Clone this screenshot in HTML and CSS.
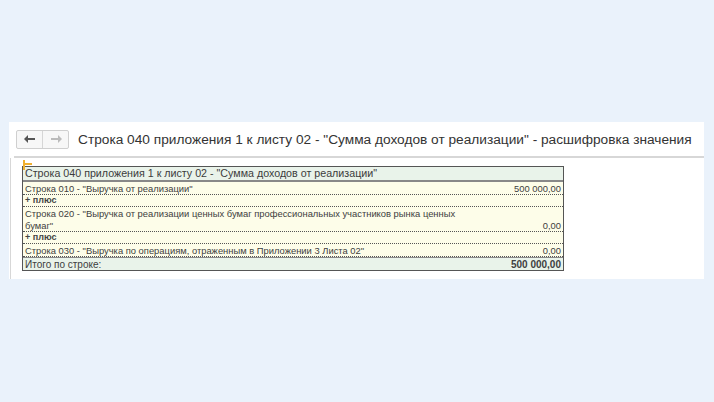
FILE: index.html
```html
<!DOCTYPE html>
<html lang="ru">
<head>
<meta charset="utf-8">
<link rel="stylesheet" href="styles.css">
</head>
<body>
<div class="page">
  <div class="panel">
    <div class="toolbar">
      <div class="nav">
        <div class="navbtn back">
          <svg width="12" height="8" viewBox="0 0 12 8"><path d="M0 4 L4 0 L4 3 L11 3 L11 5 L4 5 L4 8 Z" fill="#555"/></svg>
        </div>
        <div class="navbtn fwd">
          <svg width="12" height="8" viewBox="0 0 12 8"><path d="M12 4 L8 0 L8 3 L1 3 L1 5 L8 5 L8 8 Z" fill="#bbb"/></svg>
        </div>
      </div>
      <div class="title">Строка 040 приложения 1 к листу 02 - "Сумма доходов от реализации" - расшифровка значения</div>
    </div>
    <div class="content">
      <div class="sheet">
        <div class="marker"></div>
        <div class="grid">
          <div class="row head"><span>Строка 040 приложения 1 к листу 02 - "Сумма доходов от реализации"</span></div>
          <div class="row item"><span class="lbl">Строка 010 - "Выручка от реализации"</span><span class="val">500 000,00</span></div>
          <div class="row plus"><span>+ плюс</span></div>
          <div class="row item two"><span class="lbl">Строка 020 - "Выручка от реализации ценных бумаг профессиональных участников рынка ценных бумаг"</span><span class="val">0,00</span></div>
          <div class="row plus"><span>+ плюс</span></div>
          <div class="row item"><span class="lbl">Строка 030 - "Выручка по операциям, отраженным в Приложении 3 Листа 02"</span><span class="val">0,00</span></div>
          <div class="row total"><span class="lbl">Итого по строке:</span><span class="val">500 000,00</span></div>
        </div>
      </div>
    </div>
  </div>
</div>
</body>
</html>
```
FILE: styles.css
```css
html, body {
  margin: 0;
  padding: 0;
}
body {
  width: 714px;
  height: 402px;
  background: #eaf2fb;
  font-family: "Liberation Sans", Arial, sans-serif;
  overflow: hidden;
}
.page {
  padding-top: 122px;
  padding-left: 9px;
  width: 695px;
}
.panel {
  background: #ffffff;
  height: 157px;
  display: flex;
  flex-direction: column;
}
.toolbar {
  display: flex;
  align-items: center;
  height: 34px;
  padding-left: 2px;
  border-bottom: 2px solid #d7d7d7;
  margin-left: 5px;
}
.nav {
  display: flex;
  border: 1px solid #cfcfcf;
  border-radius: 2px;
  height: 17px;
  background: #f7f7f7;
}
.navbtn {
  width: 25px;
  height: 17px;
  display: flex;
  align-items: center;
  justify-content: center;
}
.navbtn.back {
  border-right: 1px solid #d6d6d6;
}
.title {
  margin-left: 9px;
  font-size: 13.7px;
  color: #333333;
  white-space: nowrap;
}
.content {
  flex: 1;
  border-left: 1px solid #d7d7d7;
  margin-left: 1px;
  padding: 8px 0 0 11px;
}
.sheet {
  position: relative;
  width: 542px;
}
.marker {
  position: absolute;
  left: 0;
  top: -3px;
  width: 9px;
  height: 7px;
  border-top: 2px solid #f0b030;
  border-left: 2px solid #f0b030;
  box-sizing: border-box;
  transform: translateX(1px);
}
.marker::after {
  content: "";
  position: absolute;
  left: -2px;
  top: -5px;
  height: 5px;
  border-left: 2px solid #f0b030;
}
.grid {
  border: 1px solid #555555;
  font-size: 9.4px;
  color: #404040;
}
.row {
  display: flex;
  justify-content: space-between;
  align-items: flex-end;
  padding: 0 2px 0 2px;
  background: #fdfde9;
  border-bottom: 1px dotted #555555;
  line-height: 11px;
}
.row.head {
  background: #e9f3ea;
  font-size: 10.7px;
  line-height: 13px;
  color: #3c3c3c;
  border-bottom: 2px solid #888888;
}
.row.item {
  height: 12px;
}
.row.item.two {
  height: 24px;
}
.row.item.two .lbl {
  width: 440px;
  line-height: 11.5px;
}
.row.plus {
  font-weight: bold;
  height: 11px;
  font-size: 9px;
  color: #444;
}
.row.total {
  background: #e9f3ea;
  border-bottom: none;
  border-top: 1px solid #888;
  height: 12px;
  font-size: 10px;
}
.row.total .val {
  font-weight: bold;
}
.val {
  white-space: nowrap;
}
```
